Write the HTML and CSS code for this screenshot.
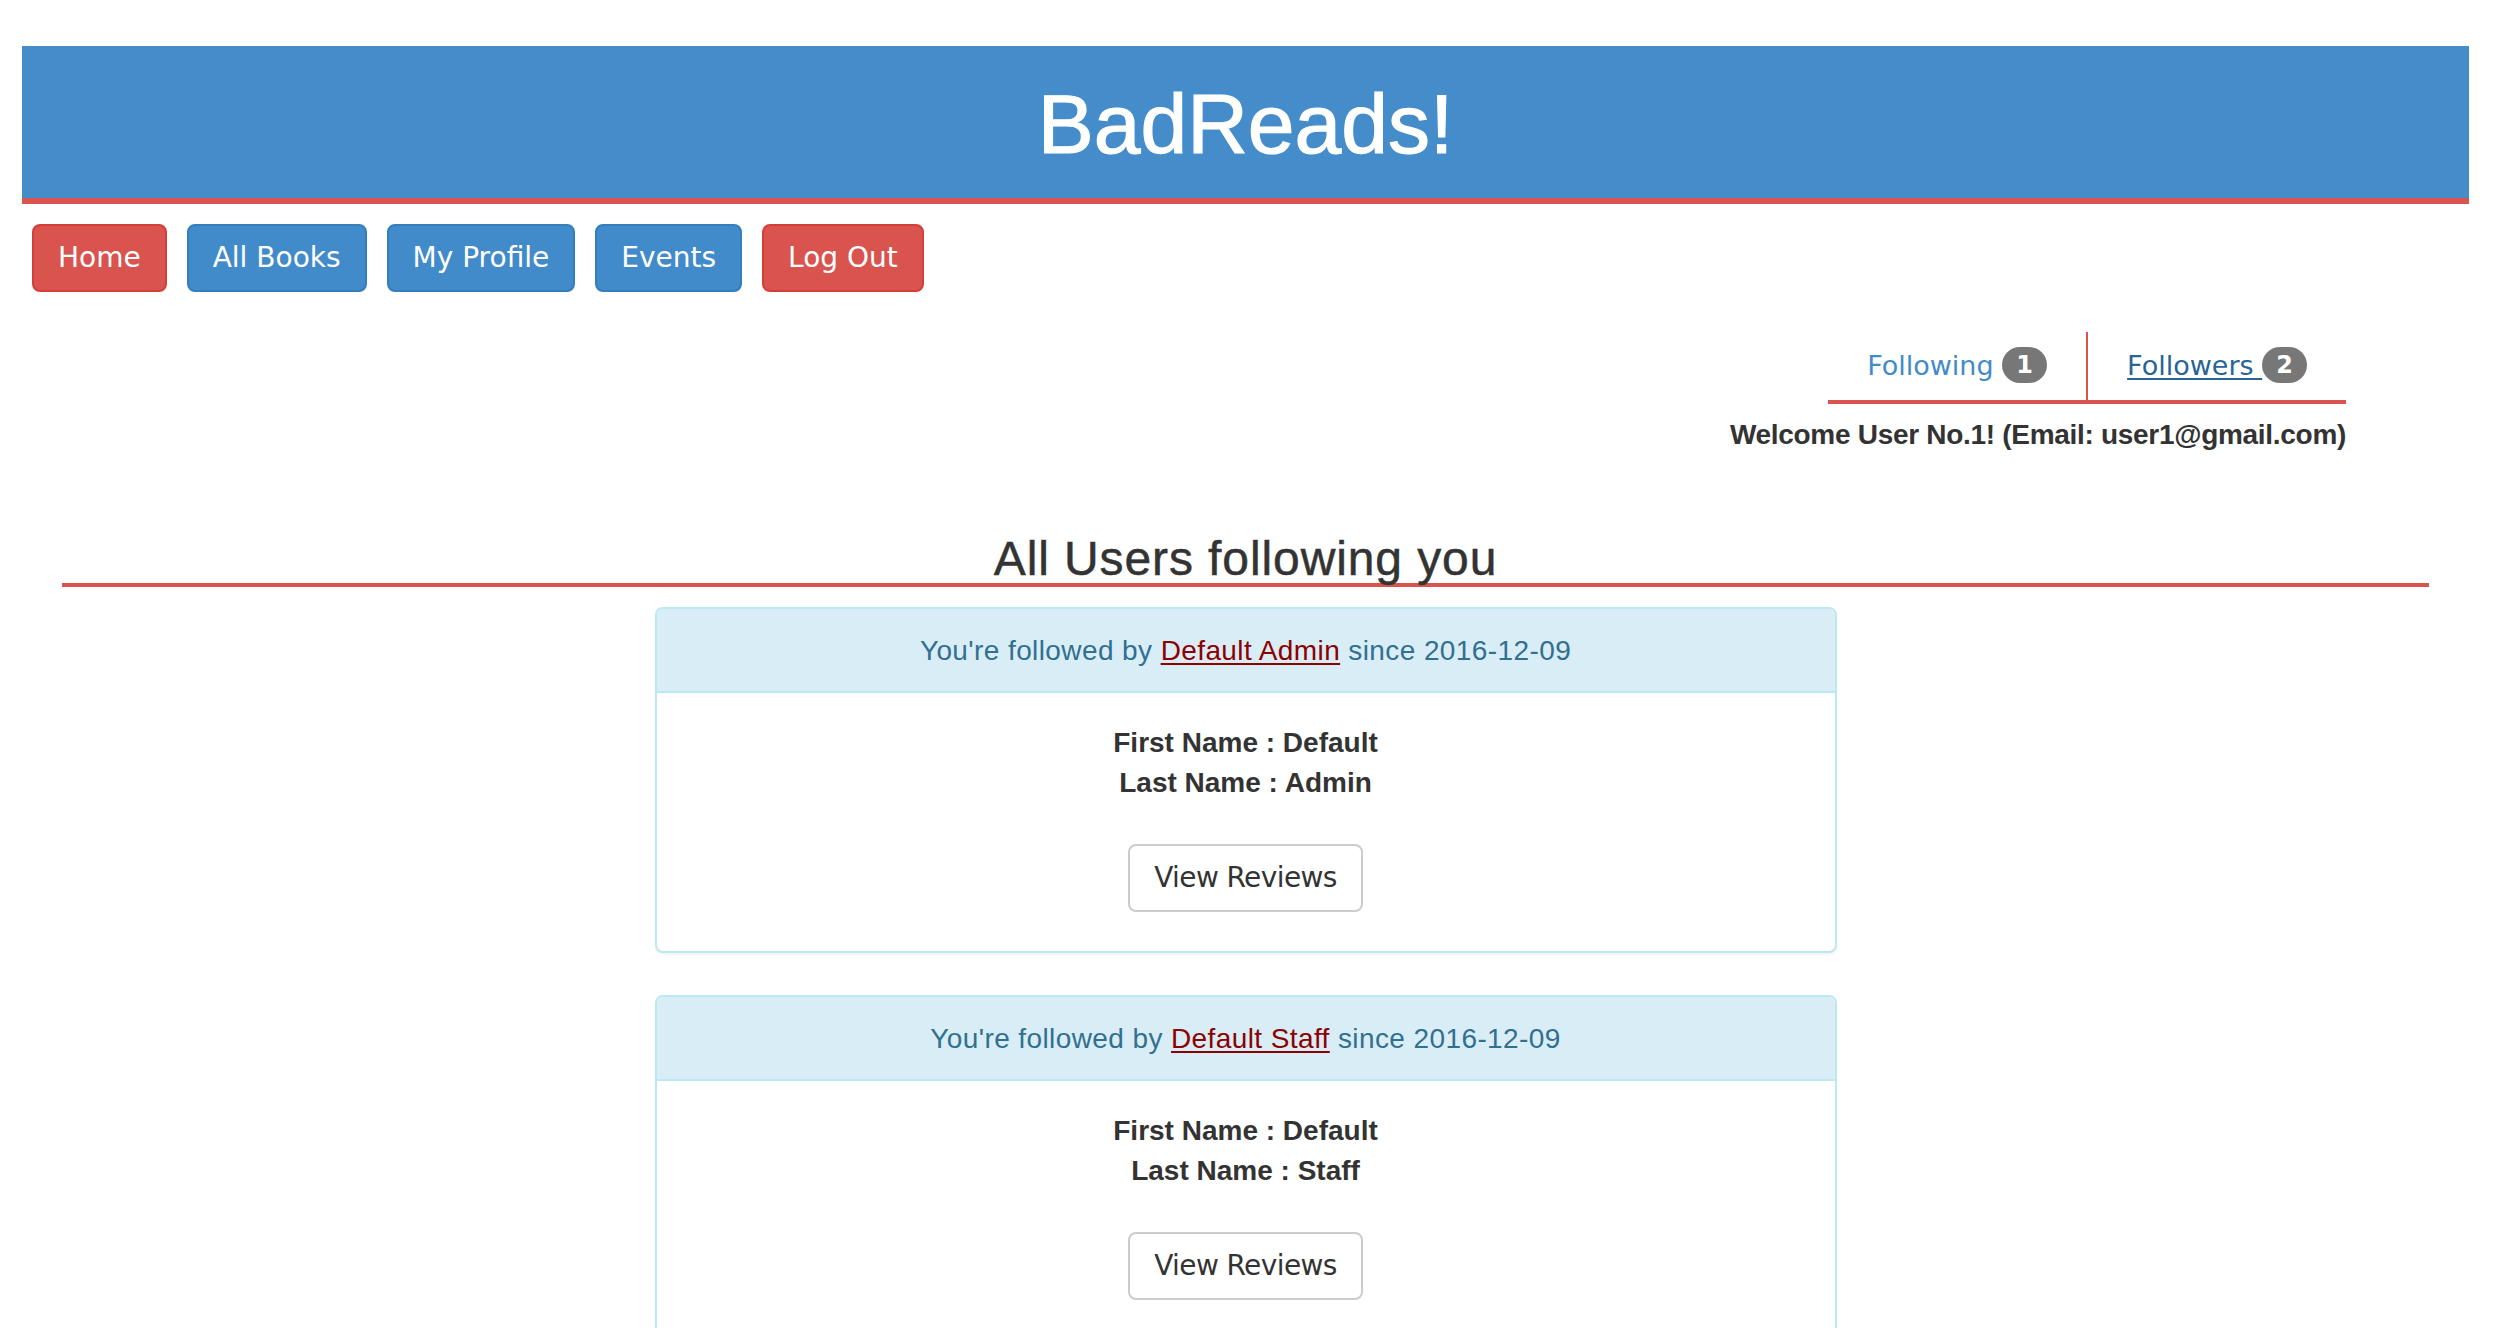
FILE: index.html
```html
<!DOCTYPE html>
<html lang="en">
<head>
<meta charset="utf-8">
<title>BadReads!</title>
<link rel="stylesheet" href="styles.css">
</head>
<body>
<div class="page">
  <header class="masthead">
    <h1 class="brand">BadReads!</h1>
  </header>

  <nav class="mainnav">
    <a class="btn btn-danger" href="#">Home</a>
    <a class="btn btn-primary" href="#">All Books</a>
    <a class="btn btn-primary" href="#">My Profile</a>
    <a class="btn btn-primary" href="#">Events</a>
    <a class="btn btn-danger" href="#">Log Out</a>
  </nav>

  <section class="user-area">
    <ul class="tabs">
      <li class="tab tab-first"><a class="tab-link" href="#">Following <span class="badge">1</span></a></li>
      <li class="tab"><a class="tab-link tab-active" href="#">Followers <span class="badge">2</span></a></li>
    </ul>
    <p class="welcome">Welcome User No.1! (Email: user1@gmail.com)</p>
  </section>

  <h3 class="section-title">All Users following you</h3>

  <div class="panel">
    <div class="panel-heading">You're followed by <a href="#">Default Admin</a> since 2016-12-09</div>
    <div class="panel-body">
      <div class="names">
        <div>First Name : Default</div>
        <div>Last Name : Admin</div>
      </div>
      <div class="actions"><a class="btn btn-default" href="#">View Reviews</a></div>
    </div>
  </div>

  <div class="panel">
    <div class="panel-heading">You're followed by <a href="#">Default Staff</a> since 2016-12-09</div>
    <div class="panel-body">
      <div class="names">
        <div>First Name : Default</div>
        <div>Last Name : Staff</div>
      </div>
      <div class="actions"><a class="btn btn-default" href="#">View Reviews</a></div>
    </div>
  </div>
</div>
</body>
</html>
```

FILE: styles.css
```css
* { box-sizing: border-box; }

body {
  margin: 0;
  background: #fff;
  color: #333;
  font-family: "Liberation Sans", Helvetica, Arial, sans-serif;
  font-size: 28px;
  line-height: 40px;
}

.page {
  width: 2469px;
  padding: 46px 0 0 22px;
}

.masthead {
  background: #458cca;
  border-bottom: 6px solid #d9534f;
  height: 158px;
  padding-top: 36px;
  text-align: center;
}

.brand {
  margin: 0;
  color: #fff;
  font-family: "Liberation Sans", Helvetica, Arial, sans-serif;
  font-size: 84px;
  line-height: 84px;
  font-weight: normal;
  -webkit-text-stroke: 1.2px #fff;
}

.mainnav {
  display: flex;
  gap: 20px;
  margin-top: 20px;
  padding-left: 10px;
}

.btn {
  display: inline-block;
  font-family: "DejaVu Sans", Verdana, sans-serif;
  font-size: 28px;
  line-height: 40px;
  padding: 12px 24px;
  border: 2px solid transparent;
  border-radius: 8px;
  color: #fff;
  text-decoration: none;
  white-space: nowrap;
}

.btn-danger {
  background: #d9534f;
  border-color: #d43f3a;
}

.btn-primary {
  background: #428bca;
  border-color: #357ebd;
}

.btn-default {
  background: #fff;
  border-color: #ccc;
  color: #333;
  letter-spacing: -0.6px;
}

.user-area {
  display: flex;
  flex-direction: column;
  align-items: flex-end;
  margin-top: 40px;
  margin-right: 123px;
}

.tabs {
  display: flex;
  list-style: none;
  margin: 0;
  padding: 0;
  border-bottom: 4px solid #d9534f;
}

.tab {
  width: 258px;
  padding: 14px 0;
  text-align: center;
  font-family: "DejaVu Sans", Verdana, sans-serif;
  font-size: 27px;
  line-height: 40px;
}

.tab-first {
  width: 260px;
  border-right: 2px solid #d9534f;
}

.tab-link {
  color: #428bca;
  text-decoration: none;
}

.tab-active {
  color: #2a6496;
  text-decoration: underline;
  text-decoration-thickness: 2px;
  text-underline-offset: 3px;
}

.badge {
  display: inline-block;
  vertical-align: 2px;
  min-width: 20px;
  padding: 6px 14px;
  border-radius: 20px;
  background: #777;
  color: #fff;
  font-family: "DejaVu Sans", Verdana, sans-serif;
  font-size: 24px;
  font-weight: bold;
  line-height: 24px;
  text-align: center;
}

.welcome {
  margin: 11px 0 0;
  font-weight: bold;
  letter-spacing: -0.3px;
  line-height: 40px;
}

.section-title {
  margin: 80px 40px 0;
  text-align: center;
  font-size: 48px;
  line-height: 48px;
  font-weight: normal;
  letter-spacing: 0.9px;
  -webkit-text-stroke: 0.5px #333;
  border-bottom: 4px solid #d9534f;
}

.panel {
  width: 1182px;
  margin: 20px auto 42px;
  border: 2px solid #bce8f1;
  border-radius: 8px;
  background: #fff;
  box-shadow: 0 2px 2px rgba(0, 0, 0, 0.05);
}

.panel-heading {
  background: #d9edf7;
  color: #31708f;
  border-bottom: 2px solid #bce8f1;
  border-radius: 6px 6px 0 0;
  padding: 22px 30px 20px;
  text-align: center;
  letter-spacing: 0.4px;
}

.panel-heading a {
  color: #8b0000;
  text-decoration: underline;
  text-decoration-thickness: 2px;
  text-underline-offset: 3px;
}

.panel-body {
  padding: 30px 30px 39px;
  text-align: center;
}

.names {
  font-weight: bold;
}

.actions {
  display: flex;
  justify-content: center;
  margin-top: 41px;
}
```
